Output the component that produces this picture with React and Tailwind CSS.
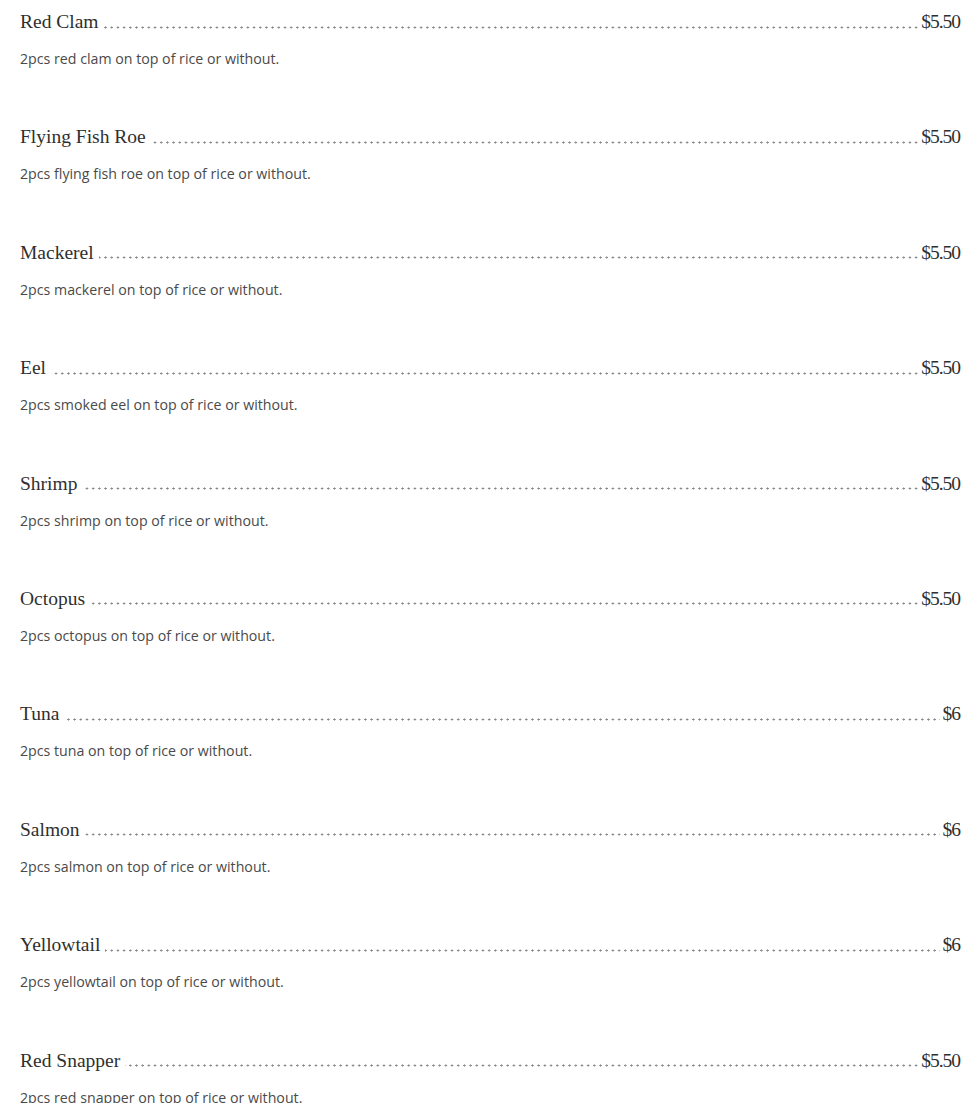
import React from "react";

const items = [
  ["Red Clam", "$5.50", "2pcs red clam on top of rice or without."],
  ["Flying Fish Roe", "$5.50", "2pcs flying fish roe on top of rice or without."],
  ["Mackerel", "$5.50", "2pcs mackerel on top of rice or without."],
  ["Eel", "$5.50", "2pcs smoked eel on top of rice or without."],
  ["Shrimp", "$5.50", "2pcs shrimp on top of rice or without."],
  ["Octopus", "$5.50", "2pcs octopus on top of rice or without."],
  ["Tuna", "$6", "2pcs tuna on top of rice or without."],
  ["Salmon", "$6", "2pcs salmon on top of rice or without."],
  ["Yellowtail", "$6", "2pcs yellowtail on top of rice or without."],
  ["Red Snapper", "$5.50", "2pcs red snapper on top of rice or without."],
];

export default function App() {
  return (
    <div className="bg-white w-[965px] h-[1103px] overflow-hidden pt-[8px] pl-[20px] pr-[5px]">
      {items.map(([name, price, desc]) => (
        <div key={name} className="h-[115.4px]">
          <div className="flex justify-between items-start h-[28px] bg-[radial-gradient(circle,#888888_0.9px,transparent_1.2px)] bg-[length:6.2px_3px] bg-repeat-x bg-[position:2px_17.5px]">
            <span className="bg-white pr-[5px] text-[19.5px] leading-[28px] text-[#2f2f2f] font-['Liberation_Serif',serif]">
              {name}
            </span>
            <span className="bg-white pl-[3px] text-[19.5px] leading-[28px] text-[#2f2f2f] tracking-[-1px] font-['Liberation_Serif',serif]">
              {price}
            </span>
          </div>
          <p className="mt-[13px] text-[14.2px] leading-[20px] text-[#4a4a4a] font-['Open_Sans',sans-serif]">
            {desc}
          </p>
        </div>
      ))}
    </div>
  );
}
